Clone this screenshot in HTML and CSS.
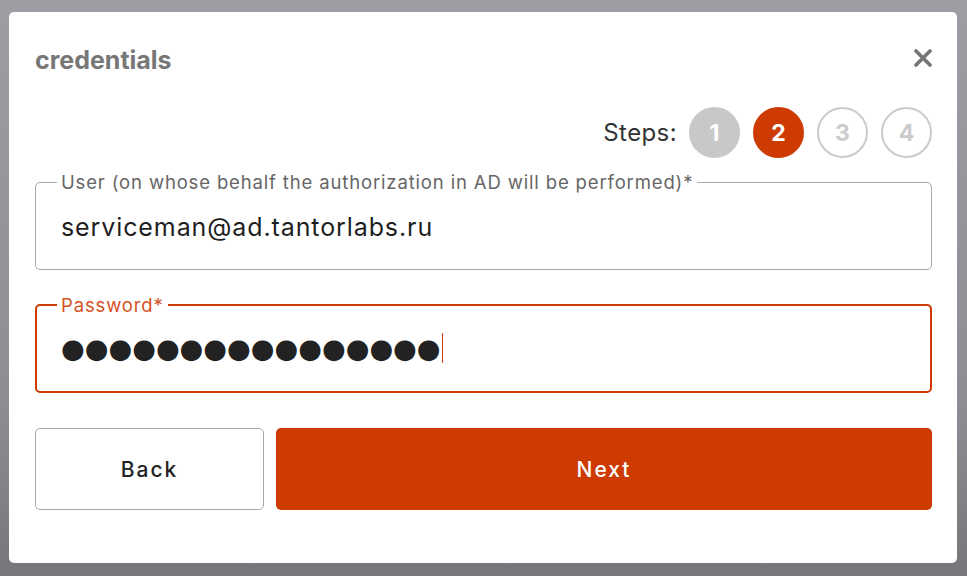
FILE: index.html
```html
<!DOCTYPE html>
<html lang="en">
<head>
	<meta charset="UTF-8">
	<meta name="viewport" content="width=device-width, initial-scale=1.0">
	<link rel="stylesheet" href="styles.css">
	<title>credentials</title>
</head>
<body>
	<div class="modal" role="dialog" aria-label="credentials">
		<div class="modal-head">
			<h2 class="modal-title">credentials</h2>
			<button class="close" aria-label="close">
				<svg width="18" height="18" viewBox="0 0 18 18"><path d="M2 2L16 16M16 2L2 16" stroke="#757575" stroke-width="3.6" stroke-linecap="round"/></svg>
			</button>
		</div>

		<div class="steps">
			<span class="steps-lbl">Steps:</span>
			<span class="step done">1</span>
			<span class="step current">2</span>
			<span class="step">3</span>
			<span class="step">4</span>
		</div>

		<fieldset class="field">
			<legend>User (on whose behalf the authorization in AD will be performed)*</legend>
			<div class="value">serviceman@ad.tantorlabs.ru</div>
		</fieldset>

		<fieldset class="field focused">
			<legend>Password*</legend>
			<div class="value secret">●●●●●●●●●●●●●●●●<span class="caret"></span></div>
		</fieldset>

		<div class="actions">
			<button class="btn back">Back</button>
			<button class="btn next">Next</button>
		</div>
	</div>
</body>
</html>
```

FILE: styles.css
```css
* {
  box-sizing: border-box;
  margin: 0;
  padding: 0;
}
html, body {
  height: 100%;
}
body {
  padding: 12px 10px 0 9px;
  background: linear-gradient(#9d9ea3, #8d8e93 70%, #76777b);
  font-family: Inter, "Noto Sans", sans-serif;
  color: #222;
}
.modal {
  height: 551px;
  padding: 0 25px 0 26px;
  border-radius: 5px;
  background: #fff;
}
.modal-head {
  display: flex;
  align-items: center;
  justify-content: space-between;
  height: 94px;
  padding-top: 2px;
}
.modal-title {
  font-size: 25px;
  font-weight: 700;
  color: #777;
}
.close {
  display: grid;
  place-items: center;
  width: 30px;
  height: 30px;
  margin-right: -6px;
  margin-top: -4px;
  border: none;
  background: none;
}
.steps {
  display: flex;
  align-items: center;
  justify-content: flex-end;
  gap: 13px;
  height: 51px;
  margin-top: 1px;
}
.steps-lbl {
  margin-right: -1px;
  font-size: 24px;
  letter-spacing: 0.4px;
  color: #333;
}
.step {
  display: grid;
  place-items: center;
  width: 51px;
  height: 51px;
  border: 2px solid #cbcbcb;
  border-radius: 50%;
  font-size: 23px;
  font-weight: 700;
  color: #cbcbcb;
}
.step.done {
  border-color: #c8c8c8;
  background: #c8c8c8;
  color: #fff;
}
.step.current {
  border-color: #cd3b02;
  background: #cd3b02;
  color: #fff;
}
.field {
  margin-top: 14px;
  padding: 0 25px;
  border: 1px solid #a8a8a8;
  border-radius: 5px;
}
.field legend {
  margin-left: -4px;
  padding: 0 4px;
  font-size: 18.5px;
  line-height: 20px;
  color: #666;
  letter-spacing: 0.85px;
}
.field .value {
  display: flex;
  align-items: center;
  height: 77px;
  padding-bottom: 7px;
  font-size: 25px;
  letter-spacing: 0.9px;
  color: #1f1f1f;
}
.field.focused {
  margin-top: 25px;
  padding: 0 24px;
  border: 2px solid #cd3b02;
}
.field.focused legend {
  color: #d4531f;
}
.value.secret {
  height: 76px;
  padding-bottom: 10px;
  font-family: "DejaVu Sans", sans-serif;
  font-size: 27.2px;
  letter-spacing: 0;
  color: #222;
}
.caret {
  display: inline-block;
  width: 1.5px;
  height: 30px;
  margin-left: 1px;
  background: #cd3b02;
}
.actions {
  display: flex;
  gap: 12px;
  margin-top: 35px;
}
.btn {
  height: 82px;
  border-radius: 5px;
  font-family: Inter, "Noto Sans", sans-serif;
  font-size: 21px;
  font-weight: 500;
  letter-spacing: 2px;
  cursor: pointer;
}
.back {
  width: 229px;
  border: 1px solid #a8a8a8;
  background: #fff;
  color: #222;
}
.next {
  flex: 1;
  border: none;
  background: #cd3b02;
  color: #fff;
}
```
